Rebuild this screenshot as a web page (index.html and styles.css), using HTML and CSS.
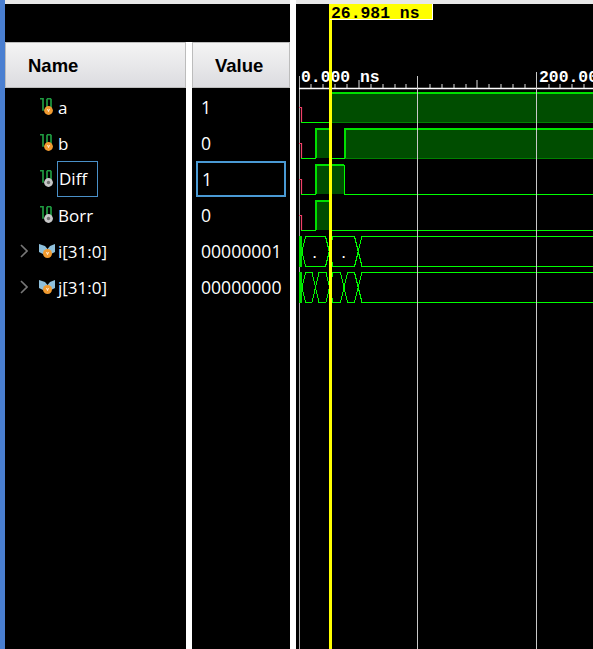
FILE: index.html
```html
<!DOCTYPE html>
<html lang="en">
<head>
    <meta charset="UTF-8">
    <meta name="viewport" content="width=device-width, initial-scale=1.0">
    <title>Waveform</title>
    <link rel="stylesheet" href="styles.css">
</head>
<body>
    <svg class="defs" width="0" height="0">
        <symbol id="scalar" viewBox="0 0 16 18">
            <path d="M1 .7h3v12M8 12V.7M12 12V.7M8 .7h4" fill="none" stroke="#1f9a40" stroke-width="1.7"/>
            <circle cx="9.5" cy="12.5" r="4.4" fill="#f09a30"/>
            <path d="M8.5 11l1 2.5 1-2.5" fill="none" stroke="#fff" stroke-width=".8"/>
        </symbol>
        <symbol id="scalar-out" viewBox="0 0 16 18">
            <path d="M1 .7h3v12M8 12V.7M12 12V.7M8 .7h4" fill="none" stroke="#1f9a40" stroke-width="1.7"/>
            <circle cx="9.5" cy="12.5" r="4.4" fill="#c8c8c8"/>
            <circle cx="9.5" cy="12.5" r="1.7" fill="#707070"/>
        </symbol>
        <symbol id="bus" viewBox="0 0 16 16">
            <path d="M0 0L6 2l2.500 3L11 2l5-2v8L8 12 0 8z" fill="#8fc0dc"/>
            <circle cx="8.500" cy="9.500" r="4.500" fill="#f09a30"/>
            <path d="M7.500 8l1 2.500 1-2.500" fill="none" stroke="#fff" stroke-width=".8"/>
        </symbol>
    </svg>

    <div class="strip"></div>

    <div class="tree">
        <div class="topbar"></div>
        <div class="tree-gap"></div>
        <div class="columns">
            <div class="panel names">
                <div class="head name-head">Name</div>
                <div class="row"><svg class="ico"><use href="#scalar"/></svg><span>a</span></div>
                <div class="row"><svg class="ico"><use href="#scalar"/></svg><span>b</span></div>
                <div class="row"><svg class="ico"><use href="#scalar-out"/></svg><span class="picked">Diff</span></div>
                <div class="row"><svg class="ico"><use href="#scalar-out"/></svg><span>Borr</span></div>
                <div class="row">
                    <svg class="arrow" width="8" height="14"><path d="M1 1l6 6-6 6" fill="none" stroke="#777" stroke-width="1.6"/></svg>
                    <svg class="ico bus"><use href="#bus"/></svg><span>i[31:0]</span>
                </div>
                <div class="row">
                    <svg class="arrow" width="8" height="14"><path d="M1 1l6 6-6 6" fill="none" stroke="#777" stroke-width="1.6"/></svg>
                    <svg class="ico bus"><use href="#bus"/></svg><span>j[31:0]</span>
                </div>
            </div>

            <div class="panel values">
                <div class="head value-head">Value</div>
                <div class="row">1</div>
                <div class="row">0</div>
                <div class="row"><div class="picked-value">1</div></div>
                <div class="row">0</div>
                <div class="row">00000001</div>
                <div class="row">00000000</div>
            </div>
        </div>
    </div>

    <div class="wave">
        <div class="topbar"></div>
        <svg class="plot" viewBox="296 0 297 649" width="297" height="649">
            <!-- grid -->
            <path class="grid-zero" d="M299.500 76V649"/>
            <!-- ruler -->
            <path class="ruler" d="M299 88.500H593"/>
            <path class="ticks" d="M311 84v4M323 84v4M335 84v4M347 84v4M359 80v8M371 84v4M383 84v4M395 84v4M406 84v4M430 84v4M442 84v4M454 84v4M466 84v4M477 80v8M489 84v4M501 84v4M513 84v4M525 84v4M549 84v4M560 84v4M572 84v4M584 84v4"/>
            <text class="time" x="301" y="81.500">0.000 ns</text>
            <text class="time" x="539" y="81.500">200.00</text>

            <!-- a -->
            <path class="fill" d="M330 93H593V122H330Z"/>
            <path class="low" d="M301 122.500H330"/>
            <path class="edge" d="M330 93H593"/>
            <path class="bottom" d="M330 122.500H593"/>
            <path class="mark" d="M299 107.500H301.500V122"/>

            <!-- b -->
            <path class="fill" d="M316 129H330V158H316ZM345 129H593V158H345Z"/>
            <path class="low" d="M301 158.500H316M330 158.500H345"/>
            <path class="edge" d="M316 158V129H330M345 158V129H593"/>
            <path class="bottom" d="M345 158.500H593"/>
            <path class="mark" d="M299 143.500H301.500V158"/>

            <!-- Diff -->
            <path class="fill" d="M316 165H344V194H316Z"/>
            <path class="low" d="M301 194.500H316M344 194.500H593M344.500 194V165"/>
            <path class="edge" d="M316 194V165H344"/>
            <path class="mark" d="M299 179.500H301.500V194"/>

            <!-- Borr -->
            <path class="fill" d="M316 201H330V230H316Z"/>
            <path class="low" d="M301 230.500H316M330 230.500H593"/>
            <path class="edge" d="M316 230V201H330"/>
            <path class="mark" d="M299 215.500H301.500V230"/>

            <!-- i[31:0] -->
            <rect class="start" x="299" y="236" width="3" height="31"/>
            <path class="bus-line" d="M302 251.500L305.500 236.500H325.500L333 266.500H354.500L362 236.500H593"/>
            <path class="bus-line" d="M302 251.500L305.500 266.500H325.500L333 236.500H354.500L362 266.500H593"/>
            <text class="dot" x="314.500" y="258">.</text>
            <text class="dot" x="343.500" y="258">.</text>

            <!-- j[31:0] -->
            <rect class="start" x="299" y="272" width="3" height="31"/>
            <path class="bus-line" d="M302 287.500L305.500 272.500H312L319 302.500H326L333 272.500H340.500L347.500 302.500H354.500L362 272.500H593"/>
            <path class="bus-line" d="M302 287.500L305.500 302.500H312L319 272.500H326L333 302.500H340.500L347.500 272.500H354.500L362 302.500H593"/>

            <!-- major grid lines lie over the waves -->
            <path class="grid" d="M417.500 76V649M536.500 72V649"/>

            <!-- cursor -->
            <rect class="cursor" x="329" y="4" width="3" height="645"/>
            <rect class="cursor-edge" x="330" y="4" width="103" height="16"/>
            <rect class="cursor-tag" x="330" y="4" width="102" height="15"/>
            <text class="tag-text" x="331" y="17.500">26.981 ns</text>
        </svg>
    </div>
</body>
</html>
```

FILE: styles.css
```css
html, body {
    margin: 0;
    padding: 0;
    height: 649px;
    overflow: hidden;
}
body {
    display: flex;
    background: #fff;
    color: #fff;
    font-family: "Open Sans", sans-serif;
    font-size: 17px;
}
.defs {
    position: absolute;
}
.strip {
    width: 5px;
    background: #4a7fd1;
}
.tree {
    width: 285px;
}
.tree-gap {
    height: 38px;
    background: #000;
}
.columns {
    display: flex;
    gap: 6px;
}
.panel {
    background: #000;
    height: 607px;
    overflow: hidden;
}
.names {
    width: 181px;
}
.values {
    width: 98px;
    font-size: 17.6px;
}
.wave {
    width: 297px;
    margin-left: 6px;
    background: #000;
    overflow: hidden;
}
.topbar {
    height: 4px;
    background: #e8e8e8;
}
.head {
    box-sizing: border-box;
    height: 46px;
    margin-bottom: 1px;
    padding: 12px 0 0 22px;
    border: 1px solid #bcbcbc;
    background: linear-gradient(#f4f4f4, #dcdce0);
    color: #000;
    font-family: "Liberation Sans", sans-serif;
    font-size: 18.5px;
    font-weight: bold;
}
.row {
    display: flex;
    align-items: center;
    height: 36px;
    position: relative;
}
.names .row {
    padding-left: 34px;
}
.values .row {
    padding-left: 9px;
}
.ico {
    width: 16px;
    height: 18px;
    margin-right: 3px;
}
.ico.bus {
    height: 16px;
    margin-top: 1px;
}
.arrow {
    position: absolute;
    left: 15px;
    top: 11px;
}
.picked {
    margin-left: -1px;
    padding: 0 10px 0 1px;
    line-height: 34px;
    border: 1px solid #4a90c8;
}
.picked-value {
    box-sizing: border-box;
    width: 90px;
    height: 36px;
    margin-left: -5px;
    padding-left: 4px;
    line-height: 32px;
    border: 2px solid #4a9ad4;
}
.plot {
    display: block;
    margin-top: -4px;
    position: relative;
}
.wave .topbar {
    position: relative;
    z-index: 1;
}
.plot path {
    fill: none;
}
.plot .fill {
    fill: #004d00;
}
.low, .bus-line {
    stroke: #00ff00;
    stroke-width: 1;
}
.bus-line {
    shape-rendering: crispEdges;
}
.edge {
    stroke: #00e000;
    stroke-width: 2;
}
.bottom {
    stroke: #008000;
    stroke-width: 1;
}
.mark {
    stroke: #f04068;
    stroke-width: 1.2;
}
.start {
    fill: #00e000;
}
.grid {
    stroke: #c8c8c8;
    stroke-width: 1;
}
.grid-zero {
    stroke: #a8a8a8;
    stroke-width: 1;
}
.ruler {
    stroke: #fff;
    stroke-width: 1.4;
}
.ticks {
    stroke: #e0e0e0;
    stroke-width: 1;
}
.time, .tag-text {
    font-family: "Liberation Mono", monospace;
    font-weight: bold;
    font-size: 16.4px;
}
.dot {
    font-family: "Liberation Mono", monospace;
    font-weight: bold;
    font-size: 12px;
    text-anchor: middle;
}
.time, .dot {
    fill: #fff;
}
.tag-text {
    fill: #000;
}
.cursor, .cursor-tag {
    fill: #ffff00;
}
.cursor-edge {
    fill: #fff;
}
```
